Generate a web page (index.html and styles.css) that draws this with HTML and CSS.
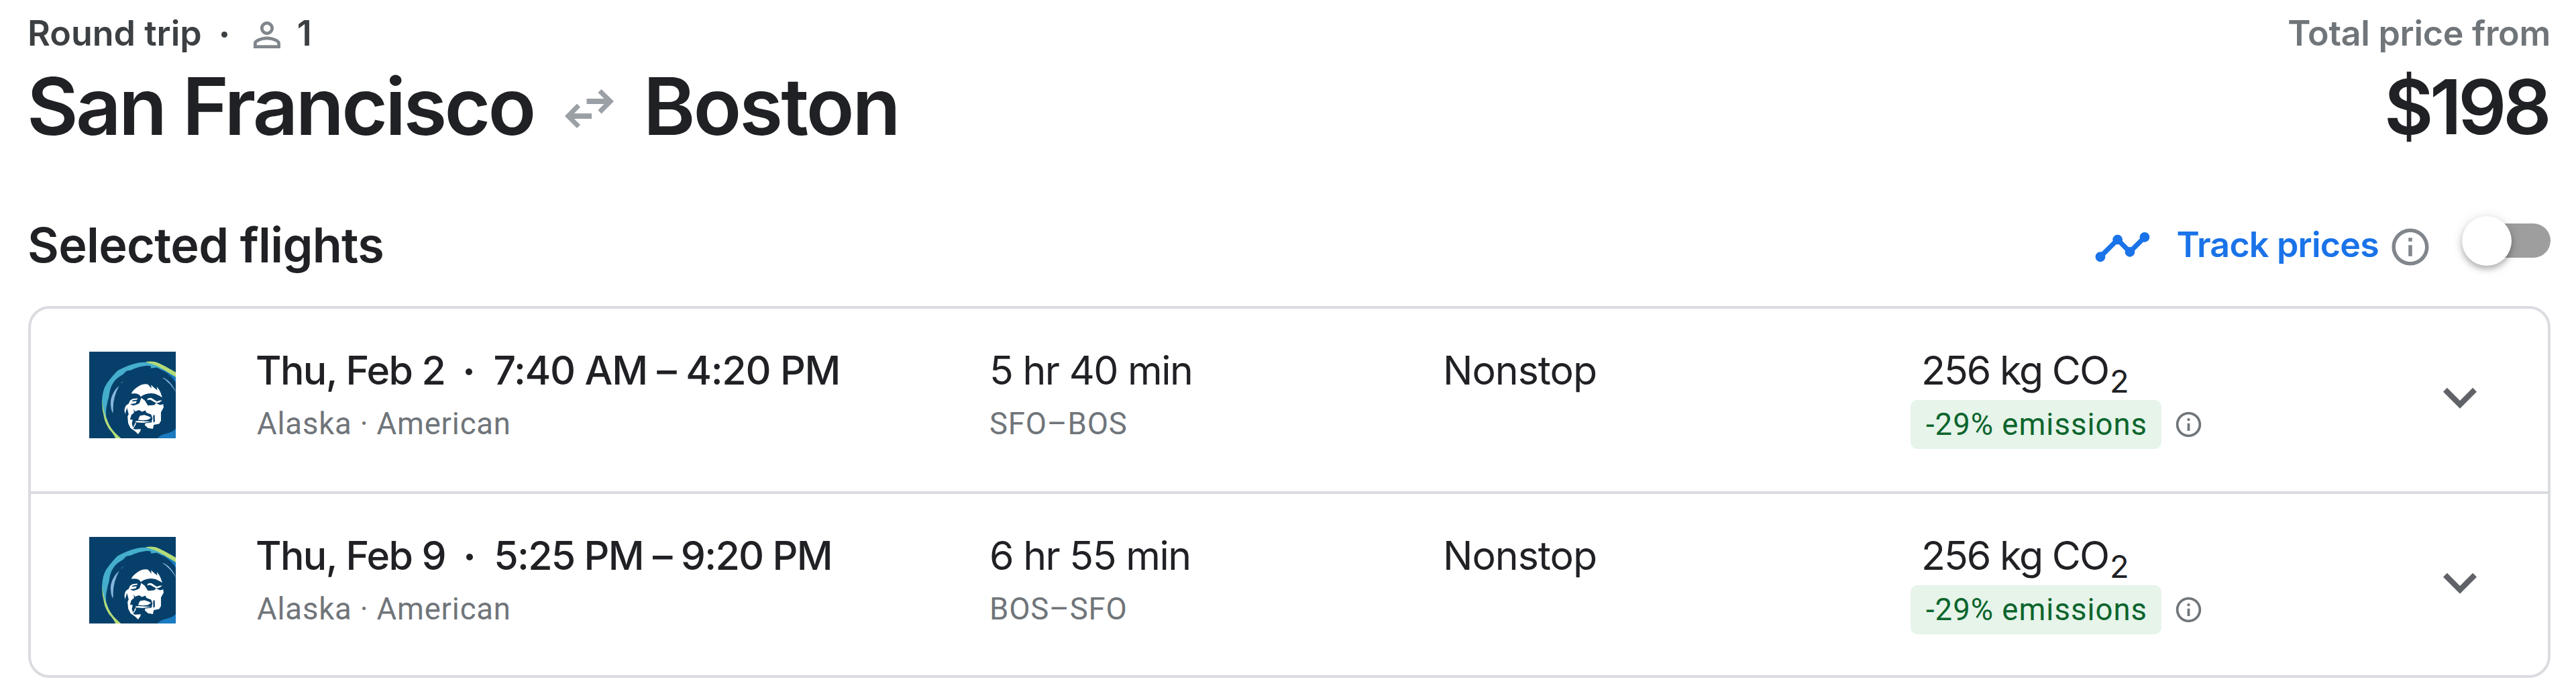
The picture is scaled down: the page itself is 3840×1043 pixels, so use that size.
FILE: index.html
```html
<!DOCTYPE html>
<html lang="en">
<head>
    <meta charset="UTF-8" />
    <meta name="viewport" content="width=device-width, initial-scale=1.0" />
    <title>San Francisco to Boston</title>
    <link rel="stylesheet" href="styles.css">
</head>
<body>
    <!-- Shared icons -->
    <svg class="sprite" width="0" height="0">
        <symbol id="info" viewBox="0 0 24 24">
            <path d="M11 7h2v2h-2zm0 4h2v6h-2zm1-9C6.48 2 2 6.48 2 12s4.48 10 10 10 10-4.48 10-10S17.52 2 12 2zm0 18c-4.41 0-8-3.59-8-8s3.59-8 8-8 8 3.59 8 8-3.59 8-8 8z" />
        </symbol>
        <symbol id="chevron" viewBox="0 0 24 24">
            <path d="M7.41 8.59L12 13.17l4.59-4.58L18 10l-6 6-6-6z" />
        </symbol>
        <symbol id="alaska" viewBox="0 0 386 386">
            <rect width="386" height="386" fill="#06406a" />
            <path fill="#1a7bc0" d="M318 68L386 106V138Q362 98 318 80zM304 386Q320 368 348 364Q372 358 386 344V386z" />
            <path fill="#45aecd" d="M57 222Q58 172 78 142Q108 102 128 84Q176 58 216 50Q240 45 262 48L296 58L342 82L322 80L300 70L275 74V64L258 62Q220 66 186 82L166 86L150 102Q118 120 108 138Q92 160 88 200Q82 220 80 232Q72 262 76 292L88 324Q60 276 57 222z" />
            <path fill="#b5dc78" d="M254 45Q290 40 316 54Q350 70 386 92V113Q350 92 318 72Q296 58 254 47zM57 215Q62 264 74 290Q88 332 112 358L141 386H117Q110 368 88 344Q70 316 66 292Q56 252 57 215z" />
            <path fill="#86b5dc" d="M134 152Q106 174 97 212Q92 246 104 274Q106 272 107 262Q104 206 134 152zM144 138L158 129L148 136L145 142zM328 116Q348 122 364 142Q382 164 386 180Q368 150 352 138Q342 124 328 118z" />
            <g fill="#fff">
                <path d="M188 187Q192 172 220 154Q244 140 262 146L278 164L276 148Q290 162 304 172L301 156Q314 168 318 182L326 204L312 196Q288 182 262 187Q242 190 230 201Q222 182 188 187z" />
                <path d="M182 218L194 210L214 208L216 213L196 216L188 222L212 220L208 230L182 234L196 240L212 236L224 230L232 206L248 218L262 240L290 238L298 230L316 238L330 234L332 248L320 270V308L312 322L288 326L284 344L262 340L248 328L250 318L220 312L208 314V324L196 344L206 346L230 345L228 354L218 368L206 356L184 340L174 320L171 290L176 278L168 250L160 278L157 262Q160 240 170 236L176 232z" />
                <path d="M262 208L276 206L286 212L302 222L312 218L326 217L314 226L300 230L286 222L272 214L258 216z" />
            </g>
            <g fill="#06406a">
                <path d="M198 256L204 266L222 260L236 268L250 262L256 272L276 280L282 296L278 316L242 320L206 316L196 338L190 322L194 304L182 302L188 282L200 272z" />
                <path d="M285 284L292 282L293 312L286 316zM256 230L276 226L290 232L272 236z" />
            </g>
            <path fill="#fff" d="M218 304L226 286L246 282L264 288L276 294L262 304L240 306zM206 310L222 308L276 312L240 317L208 315z" />
        </symbol>
    </svg>

    <div class="page">
        <!-- Trip summary -->
        <div class="header">
            <div>
                <div class="trip-meta">
                    <span>Round trip</span>
                    <i class="dot"></i>
                    <svg class="person" viewBox="0 0 24 24">
                        <path d="M12 5.9c1.16 0 2.1.94 2.1 2.1s-.94 2.1-2.1 2.1S9.9 9.16 9.9 8s.94-2.1 2.1-2.1m0 9c2.97 0 6.1 1.46 6.1 2.1v1.1H5.9V17c0-.64 3.13-2.1 6.1-2.1M12 4C9.79 4 8 5.79 8 8s1.79 4 4 4 4-1.79 4-4-1.79-4-4-4zm0 9c-2.67 0-8 1.34-8 4v3h16v-3c0-2.66-5.33-4-8-4z" />
                    </svg>
                    <span>1</span>
                </div>
                <h1>
                    <span class="from">San Francisco</span>
                    <svg class="swap" viewBox="0 0 73 58">
                        <path d="M54.5 0L73 18 54.5 36.5 49.5 31 58.5 22H32.5V14H58.5L49.5 5zM18 21.5L0 40 18 58 23 53 14 44H40V36H14L23 26.5z" />
                    </svg>
                    <span class="to">Boston</span>
                </h1>
            </div>
            <div class="total">
                <div class="total-label">Total price from</div>
                <div class="total-price">$198</div>
            </div>
        </div>

        <!-- Section heading and price tracking toggle -->
        <div class="section">
            <h2>Selected flights</h2>
            <div class="track">
                <svg class="track-icon" viewBox="0 0 24 24">
                    <path d="M23 8c0 1.1-.9 2-2 2-.18 0-.35-.02-.51-.07l-3.56 3.55c.05.16.07.34.07.52 0 1.1-.9 2-2 2s-2-.9-2-2c0-.18.02-.36.07-.52l-2.55-2.55c-.16.05-.34.07-.52.07s-.36-.02-.52-.07l-4.55 4.56c.05.16.07.33.07.51 0 1.1-.9 2-2 2s-2-.9-2-2 .9-2 2-2c.18 0 .35.02.51.07l4.56-4.55C8.02 9.36 8 9.18 8 9c0-1.1.9-2 2-2s2 .9 2 2c0 .18-.02.36-.07.52l2.55 2.55c.16-.05.34-.07.52-.07s.36.02.52.07l3.55-3.56C19.02 8.35 19 8.18 19 8c0-1.1.9-2 2-2s2 .9 2 2z" />
                </svg>
                <span class="track-label">Track prices</span>
                <svg class="track-info"><use href="#info" /></svg>
                <div class="toggle"><div class="knob"></div></div>
            </div>
        </div>

        <!-- Flights -->
        <div class="flights">
            <div class="flight">
                <svg class="logo"><use href="#alaska" /></svg>
                <div>
                    <div class="main when">
                        <span class="date">Thu, Feb 2</span>
                        <i class="dot"></i>
                        <span class="depart">7:40 AM – 4:20 PM</span>
                    </div>
                    <div class="sub airline">Alaska · American</div>
                </div>
                <div>
                    <div class="main duration">5 hr 40 min</div>
                    <div class="sub route">SFO–BOS</div>
                </div>
                <div class="main stops">Nonstop</div>
                <div>
                    <div class="main co2">256 kg CO<sub>2</sub></div>
                    <div class="emissions">
                        <span class="badge">-29% emissions</span>
                        <svg class="badge-info"><use href="#info" /></svg>
                    </div>
                </div>
                <svg class="chevron"><use href="#chevron" /></svg>
            </div>

            <div class="flight">
                <svg class="logo"><use href="#alaska" /></svg>
                <div>
                    <div class="main when">
                        <span class="date">Thu, Feb 9</span>
                        <i class="dot"></i>
                        <span class="return">5:25 PM – 9:20 PM</span>
                    </div>
                    <div class="sub airline">Alaska · American</div>
                </div>
                <div>
                    <div class="main duration">6 hr 55 min</div>
                    <div class="sub route">BOS–SFO</div>
                </div>
                <div class="main stops">Nonstop</div>
                <div>
                    <div class="main co2">256 kg CO<sub>2</sub></div>
                    <div class="emissions">
                        <span class="badge">-29% emissions</span>
                        <svg class="badge-info"><use href="#info" /></svg>
                    </div>
                </div>
                <svg class="chevron"><use href="#chevron" /></svg>
            </div>
        </div>
    </div>
</body>
</html>
```
FILE: styles.css
```css
* {
    box-sizing: border-box;
}

body {
    margin: 0;
    background-color: #fff;
    font-family: Inter, 'Open Sans', sans-serif;
    color: #202124;
}

svg {
    flex-shrink: 0;
    fill: currentColor;
}

.sprite {
    display: block;
}

.page {
    padding: 0 38px 0 42px;
}

/* Trip summary */
.header {
    display: flex;
    justify-content: space-between;
    height: 217px;
}

.trip-meta {
    display: flex;
    align-items: center;
    height: 99px;
    margin-left: -1px;
    font-size: 52px;
    font-weight: 600;
    line-height: 100px;
    color: #3c4043;
}

.dot {
    width: 9px;
    height: 9px;
    margin: 3px 29px 0;
    border-radius: 50%;
    background-color: currentColor;
}

.person {
    width: 60px;
    height: 60px;
    margin: 5px 15px 0 0;
    color: #80868b;
}

h1 {
    display: flex;
    align-items: center;
    margin: 0 0 0 -2px;
    font-size: 118px;
    font-weight: 600;
    line-height: 118px;
    white-space: nowrap;
}

.from {
    letter-spacing: -3.7px;
}

.to {
    letter-spacing: -3px;
}

.swap {
    width: 73px;
    height: 58px;
    margin: 8px 44px 0 46px;
    color: #9aa0a6;
}

.total {
    text-align: right;
    font-weight: 600;
}

.total-label {
    font-size: 52px;
    line-height: 99px;
    letter-spacing: -0.3px;
    color: #70757a;
}

.total-price {
    margin-right: 4px;
    font-size: 113px;
    line-height: 121px;
    letter-spacing: -5.5px;
}

/* Section heading */
.section {
    display: flex;
    align-items: center;
    justify-content: space-between;
    height: 183px;
    margin-top: 56px;
}

h2 {
    margin: 0 0 0 -1px;
    font-size: 72px;
    font-weight: 600;
    letter-spacing: -0.7px;
}

.track {
    display: flex;
    align-items: center;
}

.track-icon {
    width: 88px;
    height: 88px;
    margin: 6px 36px 0 0;
    color: #1a73e8;
}

.track-label {
    font-size: 52px;
    font-weight: 600;
    letter-spacing: -0.8px;
    color: #1a73e8;
}

.track-info {
    width: 66px;
    height: 66px;
    margin: 6px 49px 0 14px;
    color: #80868b;
}

.toggle {
    display: flex;
    align-items: center;
    width: 127px;
    height: 51px;
    margin-bottom: 12px;
    border-radius: 26px;
    background-color: #9e9e9e;
}

.knob {
    width: 74px;
    height: 74px;
    margin-left: -5px;
    border-radius: 50%;
    background-color: #fff;
    box-shadow: 0 5px 9px rgba(0, 0, 0, 0.25), 0 2px 18px rgba(0, 0, 0, 0.12);
}

/* Flight list */
.flights {
    border: 4px solid #dadce0;
    border-radius: 32px;
}

.flight {
    display: grid;
    grid-template-columns: 248px 1094px 675px 698px 1fr 100px;
    align-items: start;
    height: 270px;
    padding: 52px 81px 0 87px;
}

.flight:first-child {
    height: 276px;
    border-bottom: 4px solid #dadce0;
}

.logo {
    width: 129px;
    height: 129px;
    margin-top: 12px;
}

.main {
    font-size: 59px;
    line-height: 80px;
    white-space: nowrap;
}

.sub {
    font-family: Roboto, sans-serif;
    font-size: 45.5px;
    line-height: 80px;
    letter-spacing: 0.8px;
    color: #70757a;
}

.when {
    display: flex;
    align-items: center;
    font-weight: 500;
}

.when .dot {
    width: 10px;
    height: 10px;
    margin: 4px 31px 0;
}

.date {
    letter-spacing: -1.6px;
}

.depart {
    letter-spacing: -1.2px;
}

.return {
    letter-spacing: -1.7px;
}

.airline {
    padding-left: 2px;
}

.duration {
    letter-spacing: -1.5px;
}

.stops {
    padding-left: 1px;
    letter-spacing: -1px;
}

.co2 {
    padding-left: 16px;
    letter-spacing: -2px;
}

sub {
    font-size: 47px;
    line-height: 0;
    vertical-align: -12px;
    margin-left: 2px;
}

.emissions {
    display: flex;
    align-items: center;
    margin-top: 4px;
}

.badge {
    width: 374px;
    padding-left: 23px;
    border-radius: 10px;
    background-color: #e6f4ea;
    font-family: Roboto, sans-serif;
    font-size: 45.5px;
    line-height: 73px;
    letter-spacing: 1px;
    color: #0d652d;
    white-space: nowrap;
}

.badge-info {
    width: 45px;
    height: 45px;
    margin-left: 18px;
    color: #70757a;
}

.chevron {
    width: 100px;
    height: 100px;
    margin-top: 30px;
    color: #5f6368;
}
```
